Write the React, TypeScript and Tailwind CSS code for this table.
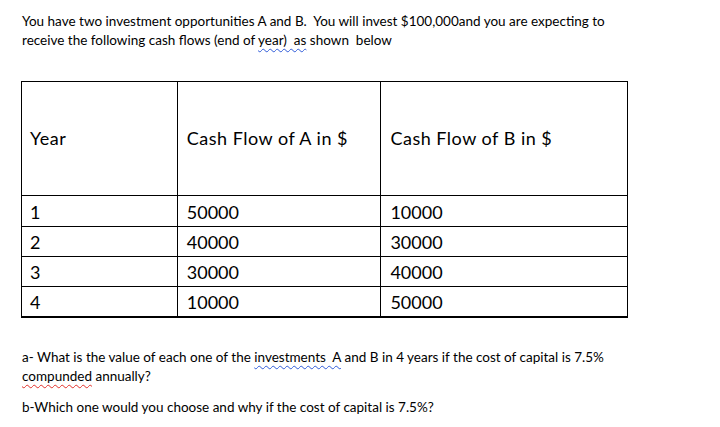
import React from 'react';

const rows = [
  { year: '1', a: '50000', b: '10000' },
  { year: '2', a: '40000', b: '30000' },
  { year: '3', a: '30000', b: '40000' },
  { year: '4', a: '10000', b: '50000' },
];

const blueWave = 'underline decoration-wavy decoration-[#2f5bd8] decoration-1 underline-offset-[3px]';
const redWave = 'underline decoration-wavy decoration-[#e0302a] decoration-1 underline-offset-[3px]';

export default function App() {
  return (
    <div className="w-[720px] h-[427px] bg-white text-black font-['Lato',sans-serif] overflow-hidden">
      <div className="pl-[22px] pt-[12px] text-[13.5px] leading-[19px]">
        <p>You have two investment opportunities A and B.&nbsp; You will invest $100,000and you are expecting to</p>
        <p>
          receive the following cash flows (end of <span className={blueWave}>year)&nbsp; as</span> shown&nbsp; below
        </p>
      </div>

      <table className="ml-[21px] mt-[31px] w-[607px] border-collapse text-[18px]">
        <colgroup>
          <col className="w-[156px]" />
          <col className="w-[204px]" />
          <col className="w-[247px]" />
        </colgroup>
        <thead>
          <tr className="h-[114px] tracking-[0.5px]">
            <th className="border border-black px-[8px] text-left font-normal">Year</th>
            <th className="border border-black px-[9px] text-left font-normal">Cash Flow of A in $</th>
            <th className="border border-black px-[9px] text-left font-normal">Cash Flow of B in $</th>
          </tr>
        </thead>
        <tbody>
          {rows.map((r, i) => (
            <tr key={r.year} className={i === 0 ? 'h-[31px]' : 'h-[30px]'}>
              <td className={`border border-black px-[8px] pt-[2px] ${i === 3 ? 'border-b-2' : ''}`}>{r.year}</td>
              <td className={`border border-black px-[9px] pt-[2px] ${i === 3 ? 'border-b-2' : ''}`}>{r.a}</td>
              <td className={`border border-black px-[9px] pt-[2px] ${i === 3 ? 'border-b-2' : ''}`}>{r.b}</td>
            </tr>
          ))}
        </tbody>
      </table>

      <div className="pl-[22px] pt-[30px] text-[13.5px] leading-[19px]">
        <p>
          a- What is the value of each one of the <span className={blueWave}>investments&nbsp; A</span> and B in 4 years if the cost of capital is 7.5%
        </p>
        <p>
          <span className={redWave}>compunded</span> annually?
        </p>
        <p className="mt-[12px]">b-Which one would you choose and why if the cost of capital is 7.5%?</p>
      </div>
    </div>
  );
}
